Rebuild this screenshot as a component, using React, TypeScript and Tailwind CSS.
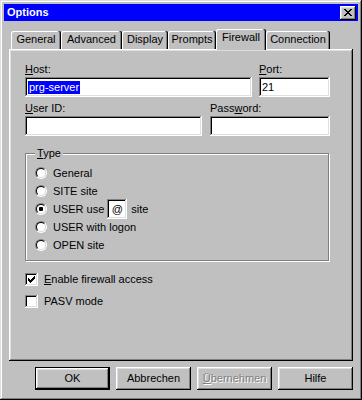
import React from 'react'

// win95 bevels
const raised =
  'shadow-[inset_-1px_-1px_0_#000,inset_1px_1px_0_#fff,inset_-2px_-2px_0_#808080,inset_2px_2px_0_#dfdfdf]'
const sunken =
  'shadow-[inset_-1px_-1px_0_#fff,inset_1px_1px_0_#808080,inset_-2px_-2px_0_#dfdfdf,inset_2px_2px_0_#000]'

const tabs = [
  { label: 'General', w: 'w-[50px]' },
  { label: 'Advanced', w: 'w-[61px]' },
  { label: 'Display', w: 'w-[46px]' },
  { label: 'Prompts', w: 'w-[48px]' },
  { label: 'Firewall', w: 'w-[50px]', active: true },
  { label: 'Connection', w: 'w-[64px]' },
]

function Radio({ checked }: { checked?: boolean }) {
  return (
    <div className="w-[12px] h-[12px] shrink-0 rounded-full border border-t-[#808080] border-l-[#808080] border-b-white border-r-white">
      <div className="w-full h-full rounded-full bg-white border border-t-black border-l-black border-b-[#dfdfdf] border-r-[#dfdfdf] flex items-center justify-center">
        {checked && <div className="w-[4px] h-[4px] rounded-[1px] bg-black" />}
      </div>
    </div>
  )
}

function Checkbox({ checked }: { checked?: boolean }) {
  return (
    <div className={`w-[13px] h-[13px] shrink-0 bg-white ${sunken} flex items-center justify-center`}>
      {checked && (
        <svg width="7" height="7" viewBox="0 0 7 7" shapeRendering="crispEdges">
          <rect x="6" y="0" width="1" height="1" fill="#000" />
          <rect x="5" y="1" width="2" height="1" fill="#000" />
          <rect x="0" y="2" width="1" height="1" fill="#000" />
          <rect x="4" y="2" width="3" height="1" fill="#000" />
          <rect x="0" y="3" width="2" height="1" fill="#000" />
          <rect x="3" y="3" width="3" height="1" fill="#000" />
          <rect x="0" y="4" width="5" height="1" fill="#000" />
          <rect x="1" y="5" width="3" height="1" fill="#000" />
          <rect x="2" y="6" width="1" height="1" fill="#000" />
        </svg>
      )}
    </div>
  )
}

function Field({ className, children }: { className: string; children?: React.ReactNode }) {
  return (
    <div className={`h-[20px] bg-white ${sunken} flex items-center pl-[3px] ${className}`}>{children}</div>
  )
}

function Button({ children, primary, disabled }: { children: React.ReactNode; primary?: boolean; disabled?: boolean }) {
  return (
    <div
      className={`w-[75px] h-[23px] flex items-center justify-center ${primary ? 'border border-black' : ''}`}
    >
      <div
        className={`w-full h-full flex items-center justify-center ${raised} ${
          disabled ? 'text-[#808080] [text-shadow:1px_1px_0_#fff]' : ''
        }`}
      >
        {children}
      </div>
    </div>
  )
}

export default function App() {
  return (
    <div
      className={`w-[362px] h-[400px] bg-[#c0c0c0] p-[4px] flex flex-col text-black text-[11px] leading-[13px] font-['Liberation_Sans',Arial,sans-serif] shadow-[inset_-1px_-1px_0_#000,inset_1px_1px_0_#dfdfdf,inset_-2px_-2px_0_#808080,inset_2px_2px_0_#fff]`}
    >
      {/* Title bar */}
      <div className="h-[17px] bg-[#0000ff] flex items-center justify-between pl-[3px] pr-[2px]">
        <span className="text-white font-bold">Options</span>
        <div className={`w-[16px] h-[14px] bg-[#c0c0c0] ${raised} flex items-center justify-center`}>
          <svg width="8" height="7" viewBox="0 0 8 7" shapeRendering="crispEdges">
            <path d="M0 0h2v1h-2z M1 1h2v1h-2z M2 2h4v1h-4z M3 3h2v1h-2z M2 4h4v1h-4z M1 5h2v1h-2z M0 6h2v1h-2z M6 0h2v1h-2z M5 1h2v1h-2z M5 5h2v1h-2z M6 6h2v1h-2z" fill="#000" />
          </svg>
        </div>
      </div>

      {/* Tabs */}
      <div className="mt-[8px] mx-[5px] pl-[2px] h-[20px] flex items-end">
        {tabs.map((t) =>
          t.active ? (
            <div
              key={t.label}
              className={`${t.w} h-[21px] -mb-[1px] relative z-10 bg-[#c0c0c0] rounded-t-[2px] pt-[2px] text-center shadow-[inset_-1px_0_0_#000,inset_-2px_0_0_#808080,inset_1px_1px_0_#fff]`}
            >
              {t.label}
            </div>
          ) : (
            <div
              key={t.label}
              className={`${t.w} h-[18px] rounded-t-[2px] pt-[2px] text-center shadow-[inset_-1px_0_0_#000,inset_-2px_0_0_#808080,inset_1px_1px_0_#fff]`}
            >
              {t.label}
            </div>
          )
        )}
      </div>

      {/* Tab panel */}
      <div className="mx-[5px] h-[312px] flex flex-col pl-[16px] pt-[14px] shadow-[inset_-1px_-1px_0_#000,inset_1px_1px_0_#fff,inset_-2px_-2px_0_#808080,inset_2px_2px_0_#dfdfdf]">
        <div className="flex">
          <div className="w-[227px]">
            <div className="mb-[1px]">
              <u>H</u>ost:
            </div>
            <Field className="w-[227px]">
              <span className="bg-[#0000ff] text-white px-[1px]">prg-server</span>
            </Field>
          </div>
          <div className="ml-[7px] w-[71px]">
            <div className="mb-[1px]">
              <u>P</u>ort:
            </div>
            <Field className="w-[71px]">
              <span>21</span>
            </Field>
          </div>
        </div>

        <div className="flex mt-[5px]">
          <div className="w-[177px]">
            <div className="mb-[1px]">
              <u>U</u>ser ID:
            </div>
            <Field className="w-[177px]" />
          </div>
          <div className="ml-[8px] w-[120px]">
            <div className="mb-[1px]">
              Pass<u>w</u>ord:
            </div>
            <Field className="w-[120px]" />
          </div>
        </div>

        {/* Type group */}
        <div className="relative mt-[17px] w-[304px] border border-[#808080] pl-[9px] pt-[10px] pb-[6px] shadow-[inset_1px_1px_0_#fff,1px_1px_0_#fff]">
          <span className="absolute -top-[7px] left-[9px] px-[2px] bg-[#c0c0c0]">
            <u>T</u>ype
          </span>
          <div className="h-[18px] flex items-center gap-[6px]">
            <Radio />
            <span>General</span>
          </div>
          <div className="h-[18px] flex items-center gap-[6px]">
            <Radio />
            <span>SITE site</span>
          </div>
          <div className="h-[18px] flex items-center gap-[6px]">
            <Radio checked />
            <span>USER use</span>
            <Field className="w-[20px] -ml-[3px] justify-center !pl-0">@</Field>
            <span className="-ml-[2px]">site</span>
          </div>
          <div className="h-[18px] flex items-center gap-[6px]">
            <Radio />
            <span>USER with logon</span>
          </div>
          <div className="h-[18px] flex items-center gap-[6px]">
            <Radio />
            <span>OPEN site</span>
          </div>
        </div>

        <div className="mt-[10px] flex flex-col gap-[6px]">
          <div className="h-[16px] flex items-center gap-[6px]">
            <Checkbox checked />
            <span>
              <u>E</u>nable firewall access
            </span>
          </div>
          <div className="h-[16px] flex items-center gap-[6px]">
            <Checkbox />
            <span>PASV mode</span>
          </div>
        </div>
      </div>

      {/* Buttons */}
      <div className="mt-[6px] mx-[5px] flex justify-end gap-[6px]">
        <Button primary>OK</Button>
        <Button>Abbrechen</Button>
        <Button disabled>
          <span>
            <u>Ü</u>bernehmen
          </span>
        </Button>
        <Button>Hilfe</Button>
      </div>
    </div>
  )
}
